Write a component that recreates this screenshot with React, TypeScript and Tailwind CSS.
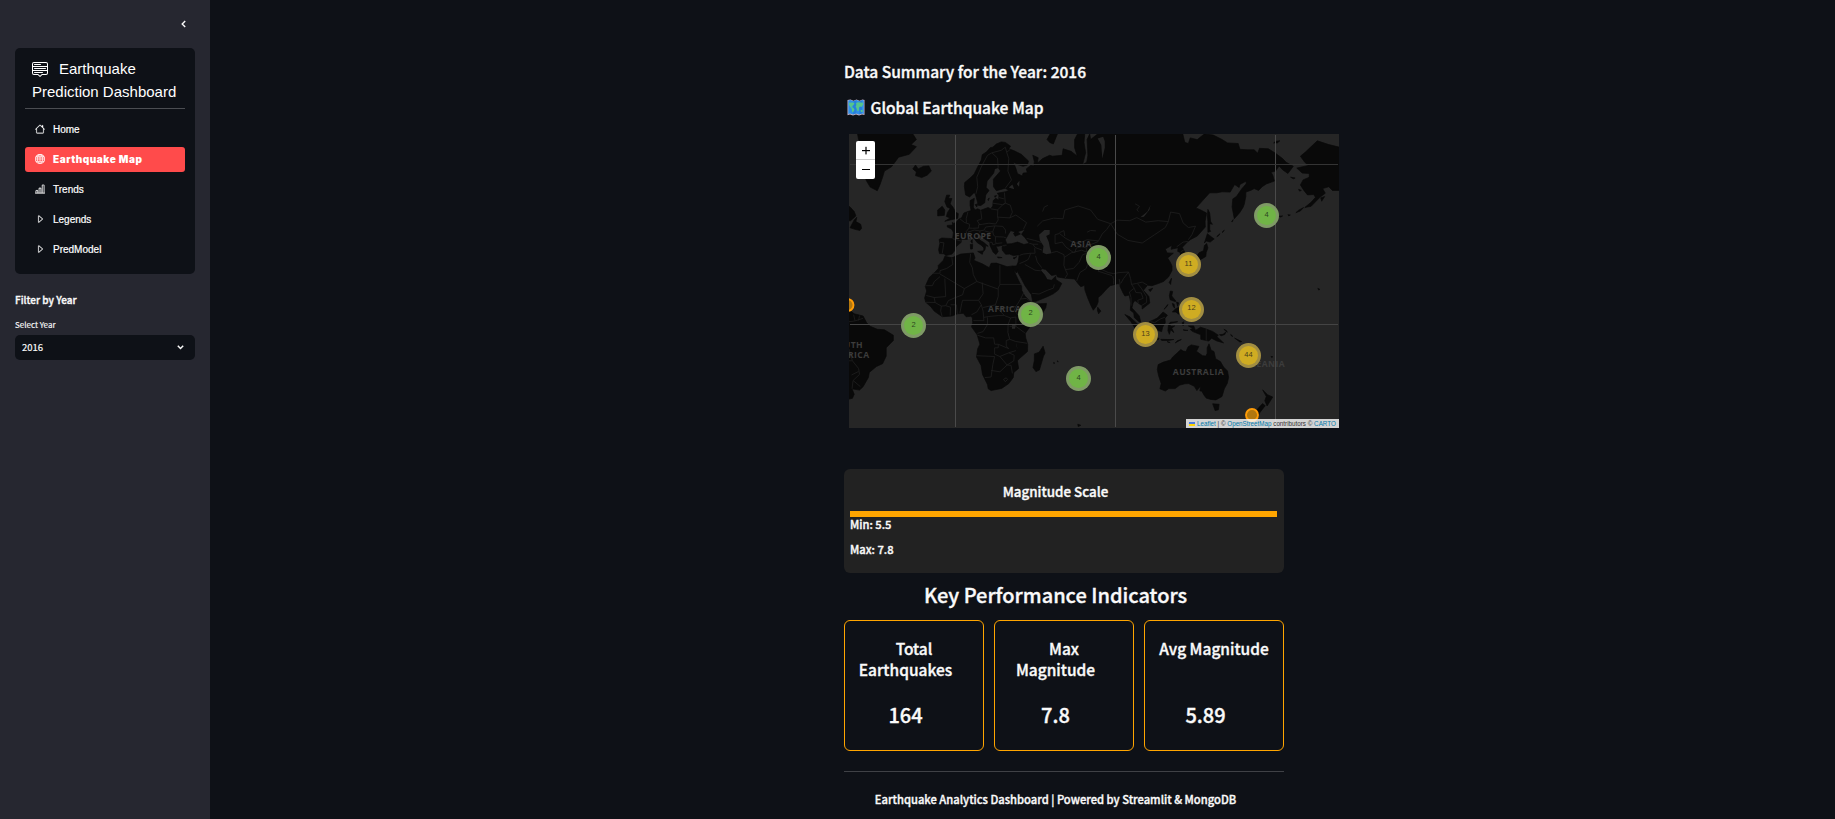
import type { ReactNode } from "react";
import { BsBarChartLine, BsCaretRight, BsGlobe, BsHouse, BsMenuUp } from "react-icons/bs";

const SANS = "font-['Noto_Sans_CJK_JP',sans-serif]";
const ARIAL = "font-['Liberation_Sans',Arial,sans-serif]";
const SEMI = "font-medium [-webkit-text-stroke:0.35px_currentColor]";

/* Web Mercator, 640px world width, origin at the map's top-left corner. */
const project = (lon: number, lat: number) => {
  const r = (lat * Math.PI) / 180;
  return [106.5 + (lon * 640) / 360, 190.5 - (640 / (2 * Math.PI)) * Math.log(Math.tan(Math.PI / 4 + r / 2))];
};
const toPath = (s: string, closed: boolean) =>
  "M" +
  s
    .split(" ")
    .map((p) => {
      const [lon, lat] = p.split(",").map(Number);
      return project(lon, lat).map((n) => n.toFixed(1)).join(" ");
    })
    .join("L") +
  (closed ? "Z" : "");

const LAND = [
  // Eurasia
  "-9,37 -9.5,38.7 -8.8,41.5 -9.2,43.1 -7.7,43.7 -3.8,43.5 -1.6,43.4 -1.2,46 -2.2,47.2 -4.6,48 -4.6,48.6 -1.6,48.7 -1.8,49.7 -1.2,49.4 0.2,49.6 1.6,50.7 3.5,51.4 4.7,53 7,53.5 8.8,53.8 8.2,55.5 8.2,57 10.6,57.7 10.3,56.4 10,54.9 11,54 12.5,54.4 14.2,53.9 18.3,54.8 19.8,54.4 21,55.3 21.2,57 22.6,57.7 24.3,57.2 24.4,58.5 23.5,59.2 28,59.6 30,60 28,60.6 23,59.9 21.4,61 21.3,63 25.3,65 24,65.8 22,65.5 21.5,64.5 17.8,62.5 17.2,60.8 18.9,60 17,58.7 16.4,56.3 14.3,55.5 12.9,55.5 11.2,58.9 10.5,59.4 8,58.1 5.7,58.7 5,61 5.2,62.1 8.5,63.4 10.5,64.3 12.5,66 14.5,67.5 15,68.6 17.5,69.2 19.5,70 21,70.1 23,70.7 25.7,71.1 28,71 31,70.3 30,69.8 33,69.4 37,68.7 41,67.3 40.5,66.4 38,66.1 35,66.5 32.5,67.1 34,65.6 34.8,64.4 37.5,63.8 38,64.5 40.4,64.6 39.8,65.5 42.5,66.4 44,66.1 44.3,67.2 43.5,68.5 46.5,68 46,66.8 49,67.8 53,68.5 54.5,68.3 60,68.5 60.5,69.8 65,69.3 68.5,68.3 67,70 67,71.5 69.5,73 72.8,72.8 72.3,71 73.2,69 72.5,68 71.5,66.5 73.8,67 74.5,68.5 74,71.5 75.5,72.5 76,71.5 80,72.5 81,73.7 87,75 98,76.3 104.3,77.7 113,75.8 113.5,73.7 107,73.3 118,73 123,73.2 127,73.5 129,71 131,70.8 132,71.8 136,71.5 140,72.5 145,72.3 150,71.5 153,70.9 159,70.8 160,69.7 164,69.6 168,69.6 170,68.9 171,69.9 176,69.8 180,68.9 184,67.8 186,67 190,66.1 187,64.4 184,65.3 182,66.2 180,65 177.5,64.7 178.5,64 179.4,62.5 175,61.8 172.5,61 170.5,60 168,60.5 166,60 163.3,59.5 163.3,58.3 162.5,56 161.9,55 160,53.2 156.8,51 155.6,55 156,57.5 158,58.2 161,60.4 163.5,61.8 163.5,62.5 160,61.6 159.5,60.8 157,61.6 154.5,59.5 150,59.6 147,59.3 143,59.3 139,57 135.3,54.7 138,54 141.2,53 140.4,50 140.5,48 136,44.5 132.5,43.2 130.7,42.3 127.6,39.8 129.4,37 129,35.3 126.5,34.4 126.5,37.5 125,38 125.2,39.6 121.3,38.9 121.8,40.7 118,39 119,37.3 122.5,37.2 119.3,35 120.8,33 121.8,31.2 121.8,29 119.8,25.8 117,23.5 114,22.4 110.5,21.3 108,21.6 105.7,18.9 108.8,15.5 109.3,12 105,8.7 105,10.4 102.5,12.2 100.9,13.4 99.9,12 99.2,9.3 100.3,8.2 103.4,4.8 104.2,1.4 103.4,1.4 100.5,4 100.3,6.5 98.3,8 98.6,12 97.7,16.3 95.3,15.8 94.2,17.5 91.8,22.5 88.5,21.7 87,21.3 85,19.6 82.3,16.6 80.2,15 80.2,12.5 79.3,10.3 77.5,8 76.2,10.5 74.5,14.5 72.8,19 72.6,21.5 70.5,20.8 69,22.3 67,24.8 61.6,25.2 57.3,25.8 56.8,27 54,26.6 50.8,29.5 48.5,30 48,29 50.1,26.8 51.5,24.5 54,24.1 56.3,26.2 56.6,24.4 59.8,22.5 57.8,19 55,17 52,15.6 45,12.8 43.4,12.7 42.7,16.5 39.1,21.3 37,25 34.8,28.5 35,29.5 34.2,27.8 32.5,29.9 32.4,31.2 34.3,31.3 35.2,33 35.9,36.5 32.5,36.1 30.5,36.8 28.2,36.7 26.3,38.5 26.2,40 29,41.2 31.5,41.3 35,42 38.5,41 41.5,41.5 39,43.9 37.2,45.2 39.2,47.1 35,46.2 36.5,45.3 33.6,44.4 32.6,45.5 33.5,46.1 31,46.6 29.7,45.1 28,43 28.8,41.3 26.2,40.6 23.9,40.2 22.8,40.4 24,38 22.8,36.6 21.2,37.6 19.4,40.6 19.3,41.9 15.8,43.6 13.7,45 12.4,45.3 12.4,44.2 13.8,42.8 16,41.8 18.4,40.2 17,40.5 16.6,38.8 15.8,38 16,39.5 14.5,40.7 12.3,41.7 10.3,43.6 8.8,44.4 6.5,43.1 3.2,43.2 3.2,41.9 0.3,40 0,38.7 -2,36.8 -5.4,36.1 -6.4,36.9",
  // Africa, Madagascar
  "-6,35.8 -2,35.1 3,36.8 10,37.3 11,35 10.2,34 15,32.3 19,30.4 20,32.5 23,32.6 29,30.9 32.4,31.3 32.5,29.9 33.5,27.8 35.5,24 37.2,21 37.3,18.8 39,15.8 43.2,12 43.2,11.4 51.2,11.8 50.8,9.5 48,4.5 44,1 41.5,-1.8 39.2,-5 39.5,-7.5 40.6,-11 40.5,-15 36,-18.8 34.8,-20 35.5,-24 32.8,-26 32.5,-28.5 30,-31.5 26,-33.8 20,-34.8 18.4,-34 18,-32 15.2,-27 14.4,-22.5 11.8,-18 12.5,-13.5 13.7,-11 13,-8.5 12.2,-5.8 9,-1.3 9.7,1 9.5,4 8.5,4.6 6,4.3 4.4,6.3 1,6 -2,4.8 -7.5,4.4 -12,7.5 -13.7,9.8 -16.7,12.4 -17.4,14.7 -16.2,18.5 -17,21 -14.8,25.5 -11.5,28.3 -9.7,30 -9.7,31.5 -6.8,34",
  "49.3,-12.1 50.4,-15.8 49.5,-17.5 47.2,-24.8 45.2,-25.6 43.6,-23.5 44.3,-20 44.4,-16.3 47,-15.4",
  // Americas, Greenland, Iceland
  "-64,11 -60,8.3 -57,6 -52,4.8 -50,1 -48,-1 -44,-2.7 -40,-3 -37,-4.8 -35,-6 -35,-9 -39,-13 -39,-17.5 -41,-21.5 -44.5,-23 -48.5,-26 -49,-28.5 -52,-33 -54,-34.6 -58.2,-34 -57,-36.5 -58,-38.3 -62,-39 -64,-42",
  "-64,58 -61.5,56 -59,54.8 -57,53.5 -56,52 -59,50.3 -64,50",
  "-59.3,47.7 -57,50.6 -55.5,51.5 -56,50 -53.3,49 -52.8,47.5 -53.8,46.7 -56,47",
  "-64,47 -60,46 -64,44.5",
  "-56,74 -54.5,71.5 -51,70 -53.5,67 -52,64.5 -50,62.5 -48,60.9 -44,59.9 -42.5,61.5 -41,63.5 -40,65 -36,66 -32,68.1 -26,68.7 -22,70.2 -25,70.6 -22,71.5 -24,72.5 -20,74",
  "-24,65.5 -22.5,66.4 -21,65.5 -18,66.1 -15,66.2 -13.6,65 -16,64 -19,63.4 -22.5,63.9 -22,64.8",
  "-6,50.1 1.3,51.2 1.6,52.8 0.2,53.2 -1.5,55 -3,56 -2,57.6 -4,57.7 -3.2,58.6 -5,58.6 -6,56.7 -4.8,55 -3,54.5 -4.5,53.2 -5.1,51.8 -3,51.3",
  "-10,52 -6.3,52.2 -6,54 -7.5,55.2 -10,54",
  "216,70.1 210,70.6 203.5,71.3 197,69.2 194,68.3 196.5,67 198.5,66.3 192,65.7 195,64.5 199,64.4 199,63.5 195.5,62.8 194,61.5 196,60 198,58.7 201.5,58.8 202.5,58 200,56.5 196.5,54.8 200,55.2 205,58 208,59.2 206.5,60.5 210,61 212,60 216,60 220,60 220,70",
  "180,71.2 182.5,71.3 181,70.9 179,70.9",
  "188.5,63.5 191,63.3 190,63.1",
  "193,60.3 194.5,60 193.5,59.8",
  "205.5,57.8 207.6,58.2 206,56.8",
  "193,53.9 195.8,54.8 194,53.7 191.5,53.1",
  "187,52.4 188.3,52.3 187.5,52",
  "182,51.9 184,52 183,51.6",
  "177,52 178,51.8 177.2,51.7",
  "51.5,71.5 55,73.5 58,73 55,70.7 53,71",
  // Mediterranean and Baltic islands
  "8.3,41 9.7,41 9.5,39.1 8.5,39",
  "8.6,42.4 9.4,43 9.4,41.5",
  "12.5,38 15.6,38.2 15.1,36.7",
  "23.6,35.5 26.2,35.2 24,35",
  "32.4,35 34.4,35.6 33,34.6",
  "11,55.7 12.5,56 12,55",
  "18.2,57.4 19,57.8 18.5,57",
  "22,58.4 23.2,58.5 22.3,58",
  // East Asia
  "142,54.2 143,53 143.5,50 144.5,49 143,49.2 143,47 143.5,46.3 142,46 142,50 141.7,52",
  "140,41.6 141.7,45.4 144,44.1 145.5,43.3 143.2,42 141,42.5",
  "141.3,41.4 142,39.5 141,37.5 140.8,35.7 139,34.8 136,33.6 134,34.6 131,34 132.5,35.4 135.5,35.6 137,37.4 139.5,38.3 140,40.5",
  "130,33.8 131.8,33.5 131.2,31.3 130.2,31.3",
  "132.3,33.7 134.5,34.2 133.8,33.2",
  "147,44.3 148.8,45.4 147.8,44.5",
  "150,46 151.2,46.8 150.4,46",
  "155.3,50 156.2,50.7 155.8,50",
  "120.2,23 121.5,25.2 121,22",
  "108.7,19.2 110.9,20 109.6,18.2",
  "79.8,8 80,9.7 81.8,7.5 80.5,6",
  // South-East Asia
  "95.3,5.6 98,4.3 100.5,2 103.5,-0.8 106,-3 105.8,-5.8 104,-5.2 101,-2.3 98.6,1.7",
  "105.3,-6.6 108.5,-6.7 110.8,-6.4 112.7,-6.9 114.5,-7.9 114,-8.6 109,-7.8",
  "109,1.5 111.3,2.6 113.5,3.6 116.8,7 119.2,5.2 117.8,3.5 118,1 116.5,-1.5 116,-4 113,-3.2 110.2,-2.9",
  "119.8,0 120.8,1.3 125,1.6 120.5,0.5 121,-1 123.3,-0.8 121.6,-2 122.8,-4.5 121,-3 120.3,-5.5 119.5,-3.5",
  "120.3,16 120.8,18.5 122.2,18.3 121.6,15.9 124,13 123.5,12.8 120.7,13.8",
  "122,7 123.5,8.6 125.5,9.7 126.4,7 125.5,5.8 124,7",
  "122,11.8 123,11.3 123.2,9.2 122.4,10.3",
  "124.3,12.5 125.5,12.1 125,10.2",
  "117.3,8.5 119.4,11.2 119,10.2",
  "127.5,1 128.5,1.5 128,-0.7",
  "128,-3 130.8,-3.3 129,-3.4",
  "115.5,-8.3 118.9,-8.4 122.8,-8.4 120,-8.9 116,-8.9",
  "123.6,-10.3 127,-8.4 125,-9",
  "119,-9.5 120.7,-10.1 119.6,-9.9",
  "131,-0.8 134,-0.8 135,-3.3 137.8,-1.5 141,-2.6 144.6,-3.9 147.8,-6 147,-6.8 150.8,-10.3 147,-9.2 144,-7.7 142.5,-9.3 138,-8.3 138,-5.7 133.5,-4 132,-2.8 133.5,-2.3",
  "148.5,-5.7 150.5,-5.5 152.1,-4.2 151.5,-5.6 149.5,-6.3",
  "151,-2.7 152.9,-4.3 152.4,-3.4",
  "154.8,-5.6 156,-6.7 155.2,-6.4",
  "157,-7.6 161,-9.6 160,-9.8",
  "164,-20.2 167,-22.3 165.5,-21.7",
  "167,-15 167.5,-16.3 166.8,-15.6",
  "177.4,-17.7 178.5,-17.8 178,-18.2",
  "203.8,19.9 205,19.4 204.3,19",
  // Australia and New Zealand
  "114,-22 113.5,-24.5 114.2,-27.5 115.7,-31.5 115,-34 118,-35 120,-33.9 123.6,-33.9 126,-32.3 129,-31.6 131.2,-31.5 134.3,-32.8 135.8,-34.8 137.8,-32.7 137.5,-35 138.5,-35 139.7,-36.8 141,-38.2 143.5,-38.8 146.4,-39 149.9,-37.5 151.2,-34 152.9,-31.4 153.6,-28.5 153,-25.3 150.8,-23.3 149,-20.4 146.3,-18.9 145.4,-15 143.8,-14.3 142.6,-10.8 141.6,-13 141.6,-16 140.8,-17.5 139,-17.3 135.5,-14.9 136.9,-12.2 132.6,-11.4 130.8,-12.5 129.7,-15 128,-14.8 126.8,-13.9 124.5,-16 122.2,-18 121,-19.6 117,-20.7",
  "144.7,-40.7 148.3,-40.9 147.9,-43.2 146,-43.5",
  "172.8,-34.5 175.5,-36.7 178.4,-37.7 177,-39.5 175.3,-41.6 174,-39.4 174.8,-37.5",
  "172.7,-40.6 174.2,-41.5 171,-44.5 170,-46.4 166.5,-46 168.5,-44",
  "68.8,-48.8 70.5,-49.2 69,-49.7",
  "57.3,-20 57.8,-20.4 57.3,-20.5",
  "55.2,-20.9 55.8,-21.2 55.3,-21.4",
];

const WATER = [
  "47,45 50,46.8 53,46.8 53,45.2 51,44.5 52.5,42 53,40 54,37.2 51,36.7 49,37.5 49.5,40.4 47.5,42.8",
  "104,51.5 108,53.5 109.8,55.7 109,54 106,51.7",
  "30,60.8 32,61.6 33,60.3",
  "34.5,61.7 36,62.6 35.8,61",
  "31.8,0.3 34,0.3 33.5,-2.4 31.8,-2.4",
  "29.2,-3.5 30.8,-8.6 29.8,-6",
  "34,-10 35,-14 34.3,-12",
  "26.5,40.4 29.5,40.9 27.5,40.2",
  "84,71.2 83,72 80,71.7 82,70.5 82.6,67.8 84,70",
];

const BORDERS = [
  "-1.6,43.4 3.2,42.4",
  "-8.8,41.9 -6.5,41.7 -7,39.5 -7.4,37.2",
  "2.5,51 5,49.7 8,49 7.6,47.6 6,46.2 7.5,43.8",
  "7,53.3 6,51 6.2,49.6",
  "7.6,47.6 9.6,47.5 13,47.6 13,48.8 15,49 18.8,49.4 22.6,49.1 24,50.6 23.6,52 23.8,54 19.8,54.4",
  "14.2,53.9 14.8,51 12.2,50.3 13.8,48.7",
  "7,46 10.5,46.8 13.7,46.5 13.7,45.6",
  "13.7,46.5 16.1,46.8 17,48 22.1,48.4 21,46.2 19,46 16.3,46.5",
  "19,46 19,44.9 15.8,45.2",
  "21,46.2 21.4,44.8 22.6,44.2 27,44.1 28.6,43.7",
  "22.6,44.2 22.4,42.3 23,41.4 26.3,41.7",
  "19.4,41.9 20.6,41.9 21,40.8 23,41.4",
  "22.1,48.4 26.6,48.2 28.1,46.8 28.2,45.5",
  "23.6,51.6 30.5,51.3 34,52.3 40,49.6 38.2,47.1",
  "30.5,51.3 32,53.3 30.8,55.6 28,56.2 26.6,55.7 23.6,54",
  "21,56.2 26.6,55.7 28,56.2 27.5,59.4",
  "24.4,57.9 27.4,57.5",
  "28,60.6 31.5,62.8 29.5,65 30,67.8 28.8,69.1 30.8,69.7",
  "24,65.8 23.6,67.9 20.5,69 18,68.5 14.5,66 12,63.5 12.5,61 11.5,59",
  "20.5,69 25.7,69.5 28,70.1 28.8,69.1",
  "40,43.5 44.5,42.7 48.5,41.8",
  "41.5,41.5 43.5,41.1 46.5,41.1",
  "43.5,41.1 44.8,39.7 48.8,38.5",
  "36,36.2 38,36.8 42.3,37.2 44.8,37.2 44.5,39.4",
  "42.3,37.2 41,34.4 39,33.4 36,32.4",
  "39,32 44.7,29.2 48,28.9",
  "45,36 46,33.2 48.5,30.4",
  "43,17.3 47,16.9 52,19 55,20 55.6,22",
  "46,48.3 49,50.2 55,51.2 60.5,51 61.5,54 69,55.3 76,54 80,50.8 87.3,49.2",
  "87.3,49.2 85,47 82.5,45.3 80.2,42.2 74,40.3 73.5,38 75,37.3",
  "56,41.3 56,45 58.5,45.5 62,43.5 66,42 69,41.4 74,43 80.2,42.5",
  "54,37.4 57,38 61,36.5 61.2,35.3 65,37.3 71,38.5 74.8,37.3",
  "56,41.3 60,42 62,40 66.5,37.4",
  "67,37.3 68,39.5 71,40 73.5,39.5",
  "61.2,35.3 61,31.5 61.8,29.5 63,27.2 61.6,25.2",
  "61.8,29.5 66.3,30 69.5,33 71.5,36.5 74.8,37.3",
  "68.2,23.8 70,28 73.5,30 74.5,32.5 74,34.7 77.5,35.5",
  "77.5,35.5 79,32.5 81,30 86,28 88.9,27.5 92,28 97.3,28.3 98.5,25 99,22 102,22.5 105,23.2 108,21.6",
  "81,30 80.2,28.7 88,26.5",
  "88.5,26.3 89,24 89,22",
  "92,24.8 92.5,23 92.3,21",
  "97.3,28.3 94.5,25 93,22.5",
  "99,22 100.5,20 97.8,18 98.7,15 98.8,10.5",
  "100.5,20 101.5,17.7 104.5,17.5 105.5,14.5 102.5,13.5 102.8,12",
  "102.5,22.3 104.5,20 107.5,15.5 107.5,12.3 104.5,10.5",
  "87.3,49.2 91,50.5 98,50.3 102,51.4 107,49.8 114,50.3 119.7,50 118,47.8 112,45 105,41.6 97,42.7 91,45.2 87.3,49.2",
  "119.7,50 121,53.3 126,52.8 128,49.5 131,47.8 135,48.3 133,45 131,43",
  "124.4,40 128,42 130.7,42.3",
  "126.7,37.8 128.4,38.6",
  "-13,27.7 -8.7,27.7 -8.7,29 -5,30 -1.5,32 -2,35",
  "-8.7,27.3 5,19.8 12,23.5 10,27 9.5,30.3 8,33 8.5,36.9",
  "12,23.5 24,19.5 24,20 25,22 25,31.6",
  "25,22 37,22",
  "-17,21.3 -13,21.3 -12,23.4 -8.7,26",
  "-6,25 -5.5,15.5 -12,15 -16.4,16.1",
  "-12,15 -11.5,12.3 -16.6,12.4",
  "-11.5,12.3 -8,10.3 -5.5,10.5 -4,13.3 0,15 4,16.5 5,19.8",
  "-8,10.3 -8.3,7.5 -7.5,4.4",
  "-5.5,10.5 -2.8,9.7 -3,5",
  "-2.8,11 0.5,11 1,6",
  "2.5,6.5 3.5,11.7 4,13.5 13,13.5 15.5,17 15,23",
  "13,13.5 14.5,11 12,7 9,5.5",
  "15.5,9.5 22.5,11 24,15.5 24,19.5",
  "14.5,11 15.5,7.5 16,2.2 10,2.2",
  "16,4 18.6,4.5 24,5 27.5,5 31,3.7 34,4.2",
  "22.5,11 24,8.7 30,9.5 34,10 36.5,14 38.5,17.8",
  "27.5,5 24,8.7",
  "34,10 33,8 35.5,5 42,4 45,5 48,8",
  "36.5,14.2 40,14.5 42.5,12.5",
  "42,4 41,2 41.5,-1.6",
  "31,3.7 29.6,0 29.5,-4.5 30.5,-8.3 28.5,-9 28.5,-12 30,-13.5 24,-11",
  "34,0 34,-1 39,-4.7",
  "34,4.2 34,0",
  "30.5,-1 34,-1",
  "12.3,-6 17,-7.5 21.5,-7.5 22,-11 24,-11 24,-13 22,-13 22,-16.5 25,-17.7 30,-15.7 34,-14.5",
  "18,4 18,0 15.5,-4 12.3,-5",
  "30.5,-8.3 34,-9.5 40.4,-10.5",
  "11.8,-17.3 22,-17.7 21,-22 20,-28.3 16.5,-28.6",
  "20,-25 25,-25.7 29,-22.2 31.3,-22.4 32,-26.5",
  "27,-29.5 28.5,-28.7 29.3,-29.5 28,-30.6 27,-29.5",
  "25,-17.7 29,-22.2 32.8,-20 33,-17 30,-15.7",
  "-60,8 -61,5 -60,1.5 -56.5,2 -52,3.5",
  "-57.3,5.5 -56.5,2",
  "-54,5 -54.5,2.3",
  "-60,-13.5 -58,-20 -54.5,-24 -54,-27 -57.6,-30 -53.5,-33",
  "-58,-20 -62,-20",
  "-57.6,-30 -58.2,-34",
  "-54.5,-25.5 -58.5,-27.3",
  "141,-2.6 141,-9.1",
  "109.7,1.7 112,1 115,3 117.8,4.1",
  "58.5,45.8 61,46.6 61.5,44.5",
  "74,46 76,46.7 79,46.5",
  "49,53.5 50,55 52,55.5",
  "101,56 103.5,55.2 102,54 103,53.5",
];

const LABELS = [
  { text: "EUROPE", x: 124, y: 104.5 },
  { text: "ASIA", x: 232, y: 113 },
  { text: "AFRICA", x: 155.5, y: 178 },
  { text: "AUSTRALIA", x: 349.3, y: 240.5 },
  { text: "OCEANIA", x: 415, y: 233 },
  { text: "SOUTH", x: -2, y: 213.5 },
  { text: "AMERICA", x: -0.5, y: 224 },
];

const MARKERS = [
  { n: 4, x: 1098.5, y: 257.5 },
  { n: 4, x: 1266.5, y: 215.5 },
  { n: 11, x: 1188.5, y: 264.5 },
  { n: 12, x: 1191.5, y: 309 },
  { n: 13, x: 1145.5, y: 334.5 },
  { n: 44, x: 1248.5, y: 355.5 },
  { n: 2, x: 913.5, y: 325.5 },
  { n: 2, x: 1030.5, y: 314 },
  { n: 4, x: 1078.5, y: 378.5 },
];

function EarthquakeMap() {
  return (
    <div className={`relative ml-[5px] mt-[16px] h-[294px] w-[490px] overflow-hidden bg-[#262626] ${ARIAL}`}>
      <svg viewBox="0 0 490 294" className="block h-[294px] w-[490px]">
        <g fill="#090909" stroke="#090909" strokeWidth="0.7" strokeLinejoin="round">
          {LAND.map((s, i) => (
            <path key={i} d={toPath(s, true)} />
          ))}
        </g>
        <g fill="#262626">
          {WATER.map((s, i) => (
            <path key={i} d={toPath(s, true)} />
          ))}
        </g>
        <g fill="none" stroke="#1f1f1f" strokeWidth="0.8" strokeLinejoin="round">
          {BORDERS.map((s, i) => (
            <path key={i} d={toPath(s, false)} />
          ))}
        </g>
        <g className="font-['Open_Sans',sans-serif] font-bold" fill="#3c3c3c" textAnchor="middle" fontSize="8.6" letterSpacing="0.45">
          {LABELS.map((l) => (
            <text key={l.text} x={l.x + 0.2} y={l.y}>
              {l.text}
            </text>
          ))}
        </g>
        <g fill="#4a4a4a">
          <rect x="106" y="1" width="1" height="292" />
          <rect x="266" y="1" width="1" height="292" />
          <rect x="426" y="1" width="1" height="292" />
          <rect x="1" y="30" width="488" height="1" fill="#343434" />
          <rect x="1" y="190" width="488" height="1" fill="#444444" />
        </g>
        <g fill="#b1770f" stroke="#ff9c07" strokeWidth="1.9">
          <circle cx="-1.5" cy="171" r="6" />
          <circle cx="403" cy="281" r="6" />
        </g>
      </svg>
      {MARKERS.map((m, i) => (
        <div
          key={i}
          className={`absolute flex size-[25px] items-center justify-center rounded-full ${m.n > 9 ? "bg-[#a28e42]" : "bg-[#7f9a66]"}`}
          style={{ left: m.x - 849 - 12.5, top: m.y - 134 - 12.5 }}
        >
          <div
            className={`flex size-[19px] items-center justify-center rounded-full pb-[2px] text-[7.5px] leading-none ${m.n > 9 ? "bg-[#cfac22] text-[#4b401a]" : "bg-[#70b446] text-[#2c4421]"}`}
          >
            {m.n}
          </div>
        </div>
      ))}
      <div className="absolute left-[7px] top-[7px] h-[38px] w-[19px] rounded-[2px] bg-white">
        <svg viewBox="0 0 19 38" className="block h-full w-full" fill="black">
          <rect y="18" width="19" height="1" fill="#cccccc" />
          <rect x="6" y="9" width="8" height="1.2" />
          <rect x="9.4" y="5.8" width="1.2" height="7.6" />
          <rect x="6" y="28" width="8" height="1" />
        </svg>
      </div>
      <div className="absolute bottom-0 right-0 flex h-[9px] w-[153px] items-center whitespace-pre bg-white/80 pl-[3px] text-[6.27px] leading-[9px] text-[#333333]">
        <svg viewBox="0 0 6 4" className="mr-[2px] h-[4px] w-[6px]">
          <rect width="6" height="2" fill="#4c7be1" />
          <rect y="2" width="6" height="2" fill="#ffd500" />
        </svg>
        <span className="text-[#0078a8]">Leaflet</span> | © <span className="text-[#0078a8]">OpenStreetMap</span> contributors ©{" "}
        <span className="text-[#0078a8]">CARTO</span>
      </div>
    </div>
  );
}

function MapEmoji() {
  return (
    <svg viewBox="0 0 18 16" className="-ml-[0.5px] mr-[6px] h-[17px] w-[18px]" preserveAspectRatio="none">
      <path d="M.5 1 3.5.4 6.5 1.6 9.5.4 12.5 1.6 15.5.4 17.5 1V15L15 14.6 12 15.6 9 14.6 6 15.6 3 14.6.5 15.3Z" fill="#c3b4c9" />
      <path d="M1.3 1.5 3.5 1 6.5 2.1 9.5 1 12.5 2.1 15.5 1 16.8 1.4V14L15 13.7 12 14.7 9 13.7 6 14.7 3 13.7 1.3 14.1Z" fill="#2f8fe8" />
      <path d="M6.2 2V14.7L9.3 13.7V1ZM12.3 2V14.7L15 13.7V1.2Z" fill="#1f74cf" opacity=".55" />
      <path d="M2 3.5 6.5 3.3 7.5 4.5 5.5 6.5 4.5 7.5 6.5 8.5 7.5 10 6 12.5 5 12 4.8 9.5 3 7 2 5.5ZM9 4 11 3 16 3.5 16 5.5 14.5 7.5 13 7 12 8 11.8 11 10.5 11.3 9.5 8.5 8.6 7 9.5 5.5ZM13.5 10.5 15.6 10 15.8 12 14 12.2Z" fill="#56c58b" />
    </svg>
  );
}

function NavItem({ icon, label, active }: { icon: ReactNode; label: string; active?: boolean }) {
  return (
    <a
      className={`flex h-[25px] items-center rounded-[3px] pl-[10px] text-[10px] text-white ${active ? "bg-[#ff4b4b] font-['Inter',sans-serif] font-black tracking-[0.53px]" : `${ARIAL} [-webkit-text-stroke:0.2px_currentColor]`}`}
    >
      <span className="mb-[1px] mr-[8px] flex size-[10px] items-center justify-center text-[10px] [&_svg]:stroke-[0.3]">{icon}</span>
      <span>{label}</span>
    </a>
  );
}

function Sidebar() {
  return (
    <aside className={`h-full w-[210px] shrink-0 bg-[#262730] px-[15px] text-[#fafafa] ${SANS}`}>
      <div className="flex h-[48px] items-center justify-end pr-[9px]">
        <svg viewBox="0 0 5 8" className="mb-[1px] h-[8px] w-[5px]" fill="none" stroke="#fafafa" strokeWidth="1.4">
          <path d="M4.2 1 1.2 4 4.2 7" />
        </svg>
      </div>
      <div className="h-[226px] rounded-[5px] bg-[#0e1117] px-[10px] pt-[9px]">
        <div className={`h-[52px] border-b border-[#4b4d52] pl-[7px] text-[15px] leading-[23px] text-white ${ARIAL}`}>
          <BsMenuUp className="mr-[11px] inline-block size-[16px] stroke-0 align-[-3px]" />
          Earthquake
          <br />
          Prediction Dashboard
        </div>
        <nav className="mt-[8px] flex flex-col gap-[5px]">
          <NavItem icon={<BsHouse />} label="Home" />
          <NavItem icon={<BsGlobe />} label="Earthquake Map" active />
          <NavItem icon={<BsBarChartLine />} label="Trends" />
          <NavItem icon={<BsCaretRight />} label="Legends" />
          <NavItem icon={<BsCaretRight />} label="PredModel" />
        </nav>
      </div>
      <div className={`mt-[18px] h-[16px] text-[10px] leading-[16px] ${SEMI}`}>Filter by Year</div>
      <div className="mt-[10px] h-[14px] text-[8px] leading-[14px] [-webkit-text-stroke:0.15px_currentColor]">Select Year</div>
      <div className="mt-[3px] flex h-[25px] items-center justify-between rounded-[5px] bg-[#0e1117] pl-[7px] pr-[11px] text-[9.5px] [-webkit-text-stroke:0.2px_currentColor]">
        2016
        <svg viewBox="0 0 7 5" className="h-[5px] w-[7px]" fill="none" stroke="#fafafa" strokeWidth="1.5">
          <path d="M.8.8 3.5 3.5 6.2.8" />
        </svg>
      </div>
    </aside>
  );
}

function Kpi({ lines, value }: { lines: string[]; value: string }) {
  const wrapped = lines.length > 1;
  return (
    <div className="h-[131px] w-[140px] rounded-[6px] border border-[#ffa500] pt-[17px] text-center">
      <div className={`h-[56px] whitespace-nowrap text-[15.5px] leading-[21px] ${SEMI}`}>
        <div>{lines[0]}</div>
        {wrapped && <div className="pr-[17px]">{lines[1]}</div>}
      </div>
      <div className={`mt-[7px] pr-[17px] text-[20px] leading-[27px] ${SEMI}`}>{value}</div>
    </div>
  );
}

export default function App() {
  return (
    <div className="flex h-[819px] w-[1835px] overflow-hidden bg-[#0e1117]">
      <Sidebar />
      <main className={`ml-[634px] w-[440px] pt-[60px] text-[#fafafa] ${SANS}`}>
        <h3 className={`h-[22px] whitespace-nowrap text-[15.55px] leading-[22px] ${SEMI}`}>Data Summary for the Year: 2016</h3>
        <h3 className={`mt-[14px] flex h-[22px] items-center whitespace-nowrap pl-[3px] text-[15.55px] leading-[22px] ${SEMI}`}>
          <MapEmoji />
          Global Earthquake Map
        </h3>
        <EarthquakeMap />
        <section className="mt-[41px] h-[104px] rounded-[6px] bg-[#222222] px-[6px] pt-[12px]">
          <h4 className={`h-[20px] text-center text-[13.4px] leading-[20px] ${SEMI}`}>
            <span className="mr-[17px]">Magnitude Scale</span>
          </h4>
          <div className="mt-[10px] h-[6px] w-[427px] bg-[#ffa500]" />
          <div className={`-mt-px h-[16px] text-[11.2px] leading-[16px] ${SEMI}`}>Min: 5.5</div>
          <div className={`mt-[9px] h-[16px] text-[11.2px] leading-[16px] ${SEMI}`}>Max: 7.8</div>
        </section>
        <h2 className={`mt-[7px] h-[30px] pr-[17px] text-center text-[20px] leading-[30px] ${SEMI}`}>Key Performance Indicators</h2>
        <section className="mt-[10px] flex gap-[10px]">
          <Kpi lines={["Total", "Earthquakes"]} value="164" />
          <Kpi lines={["Max", "Magnitude"]} value="7.8" />
          <Kpi lines={["Avg Magnitude"]} value="5.89" />
        </section>
        <footer className={`mt-[20px] border-t border-[#3f4146] pr-[17px] pt-[19px] text-center text-[11.2px] leading-[16px] ${SEMI}`}>
          Earthquake Analytics Dashboard | Powered by Streamlit &amp; MongoDB
        </footer>
      </main>
    </div>
  );
}
